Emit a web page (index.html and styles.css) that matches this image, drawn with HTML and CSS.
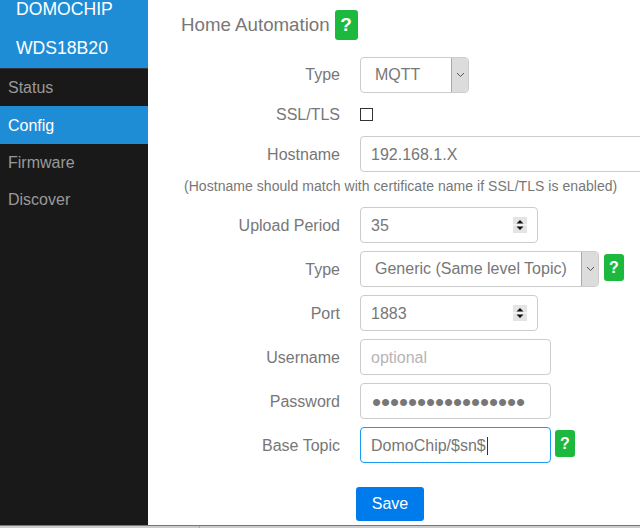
FILE: index.html
```html
<!DOCTYPE html>
<html lang="en">
<head>
<meta charset="utf-8">
<title>Home Automation</title>
<link rel="stylesheet" href="styles.css">
</head>
<body>
<div class="app">
  <aside class="sidebar">
    <div class="brand">
      <div class="brand-line">DOMOCHIP</div>
      <div class="brand-line">WDS18B20</div>
    </div>
    <nav class="nav">
      <a class="nav-item nav-status">Status</a>
      <a class="nav-item nav-config active">Config</a>
      <a class="nav-item">Firmware</a>
      <a class="nav-item">Discover</a>
    </nav>
  </aside>
  <main class="main">
    <div class="title-row">
      <h2 class="title">Home Automation</h2>
      <span class="help help-lg">?</span>
    </div>
    <form class="form">
      <div class="row">
        <label class="label label-high">Type</label>
        <div class="field w-mqtt"><span class="sel-text">MQTT</span><span class="arrow"><svg width="9" height="6" viewBox="0 0 9 6"><path d="M1 1l3.5 3.5L8 1" fill="none" stroke="#555" stroke-width="1"/></svg></span></div>
      </div>
      <div class="row row-check">
        <label class="label label-high">SSL/TLS</label>
        <span class="check"></span>
      </div>
      <div class="row">
        <label class="label">Hostname</label>
        <div class="field w-host"><span class="val">192.168.1.X</span></div>
      </div>
      <p class="note">(Hostname should match with certificate name if SSL/TLS is enabled)</p>
      <div class="row">
        <label class="label">Upload Period</label>
        <div class="field w-num"><span class="val">35</span><span class="spin"><svg width="14" height="16" viewBox="0 0 14 16"><rect width="14" height="16" fill="#e4e4e4"/><rect x="0" y="7.5" width="14" height="1" fill="#fff"/><path d="M7 3l3.5 3.5h-7zM3.5 9.5h7L7 13z" fill="#111"/></svg></span></div>
      </div>
      <div class="row">
        <label class="label">Type</label>
        <div class="field w-generic"><span class="sel-text">Generic (Same level Topic)</span><span class="arrow"><svg width="9" height="6" viewBox="0 0 9 6"><path d="M1 1l3.5 3.5L8 1" fill="none" stroke="#555" stroke-width="1"/></svg></span></div>
        <span class="help">?</span>
      </div>
      <div class="row">
        <label class="label">Port</label>
        <div class="field w-num"><span class="val">1883</span><span class="spin"><svg width="14" height="16" viewBox="0 0 14 16"><rect width="14" height="16" fill="#e4e4e4"/><rect x="0" y="7.5" width="14" height="1" fill="#fff"/><path d="M7 3l3.5 3.5h-7zM3.5 9.5h7L7 13z" fill="#111"/></svg></span></div>
      </div>
      <div class="row">
        <label class="label">Username</label>
        <div class="field w-text"><span class="val placeholder">optional</span></div>
      </div>
      <div class="row">
        <label class="label">Password</label>
        <div class="field w-text"><span class="val dots">•••••••••••••••••</span></div>
      </div>
      <div class="row">
        <label class="label">Base Topic</label>
        <div class="field w-text focus"><span class="val">DomoChip/$sn$</span><span class="caret"></span></div>
        <span class="help help-tight">?</span>
      </div>
      <div class="actions"><button type="button" class="save">Save</button></div>
    </form>
  </main>
</div>
<div class="strip"><span class="strip-a"></span><span class="strip-b"></span></div>
</body>
</html>
```
FILE: styles.css
```css
* { box-sizing: border-box; }
html, body { margin: 0; padding: 0; height: 528px; overflow: hidden; background: #fff; }
body { font-family: "Liberation Sans", Arial, sans-serif; font-size: 16px; color: #777; }

.app { display: flex; height: 525px; }

.sidebar { width: 148px; flex: none; background: #191919; }
.brand { height: 69px; background: #1f8dd6; border-bottom: 1px solid #333; display: flex; flex-direction: column; justify-content: flex-end; overflow: hidden; }
.brand-line { height: 39px; flex: none; line-height: 38px; padding-left: 16px; color: #fff; font-size: 17.6px; }
.nav { display: flex; flex-direction: column; }
.nav-item { display: block; height: 37px; line-height: 37px; padding-left: 8px; color: #999; }
.nav-status { line-height: 37px; }
.nav-config { height: 38px; line-height: 39px; }
.nav-item.active { background: #1f8dd6; color: #fff; }

.main { flex: 1; min-width: 0; overflow: hidden; padding: 10px 0 0 33px; }
.title-row { display: flex; align-items: center; gap: 5px; height: 30px; margin-bottom: 17px; }
.title { margin: 0; font-size: 18.72px; font-weight: 400; color: #777; }

.help { display: flex; align-items: center; justify-content: center; align-self: flex-start; width: 20px; height: 27px; margin: 3px 0 0 5px; border-radius: 3px; background: #1db93f; color: #fff; font-weight: 700; font-size: 16px; }
.help-lg { align-self: center; width: 23px; height: 30px; margin: 0; font-size: 19px; }
.help-tight { margin-left: 4px; }

.form { margin-left: -33px; }
.row { display: flex; align-items: center; height: 36px; margin-bottom: 8px; }
.row-check { height: 27px; }
.label { width: 192px; margin-right: 20px; padding-top: 2px; flex: none; text-align: right; color: #777; }
.label-high { padding-top: 0; }

.field { display: flex; align-items: center; height: 36px; flex: none; border: 1px solid #ccc; border-radius: 4px; background: #fff; color: #777; overflow: hidden; }
.w-mqtt { width: 109px; }
.w-host { width: 300px; }
.w-num { width: 178px; }
.w-generic { width: 239px; }
.w-text { width: 191px; }
.focus { border-color: #1b9bf0; }

.val { padding: 2px 0 0 10px; white-space: nowrap; }
.sel-text { flex: 1; padding-left: 14px; white-space: nowrap; }
.arrow { flex: none; align-self: stretch; width: 17px; display: flex; align-items: center; justify-content: center; background: #dcdcdc; border-left: 1px solid #a9a9a9; }
.spin { margin-left: auto; margin-right: 10px; display: flex; }
.placeholder { color: #b5b5b5; }
.val.dots { font-size: 26px; line-height: 34px; padding: 1px 0 0 11px; letter-spacing: -0.1px; color: #777; }
.caret { width: 1px; height: 18px; margin: 1px 0 0 1px; background: #333; }

.check { width: 13px; height: 13px; border: 1px solid #333; background: #fff; }

.note { margin: -8px 0 0; height: 35px; line-height: 28px; padding-left: 36px; font-size: 14px; letter-spacing: 0.045px; white-space: nowrap; color: #777; }

.actions { padding: 16px 0 0 208px; }
.save { display: block; width: 68px; height: 34px; padding: 0; border: 0; border-radius: 3px; background: #007bec; color: #fff; font: 16px "Liberation Sans", Arial, sans-serif; }

.strip { display: flex; height: 3px; background: #ccc; border-top: 1px solid #777; }
.strip-a { width: 200px; border-right: 1px solid #aaa; }
.strip-b { flex: 1; }
```
